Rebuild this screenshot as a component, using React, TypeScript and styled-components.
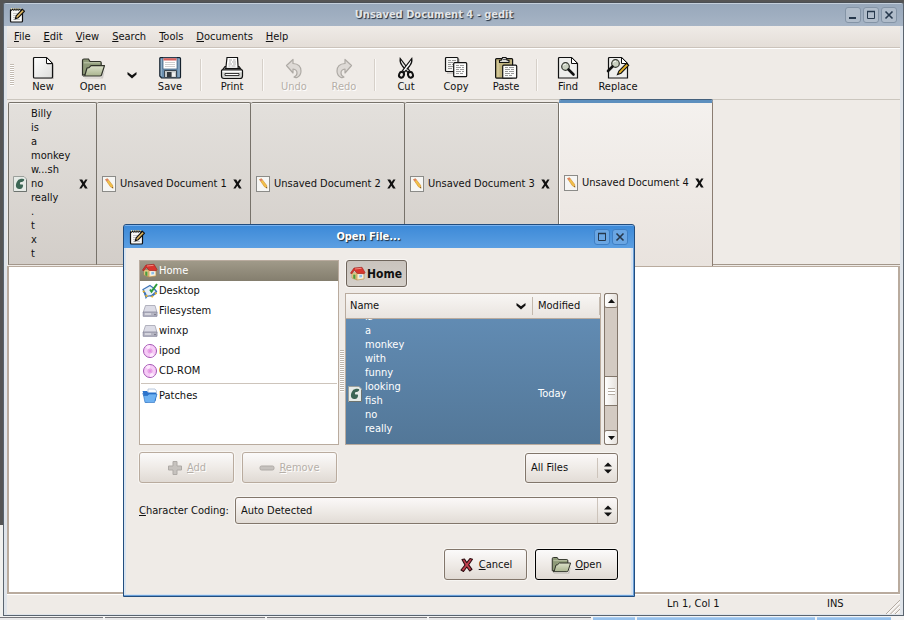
import React, { useLayoutEffect, useRef } from "react";
import styled, { createGlobalStyle, css } from "styled-components";

const face = "#efebe7";
const edge = "#b9ab9e";
const dark = "#82766b";

const GlobalStyle = createGlobalStyle`
  *, *::before, *::after { box-sizing: border-box; }
  body {
    margin: 0;
    color: #111;
    background: ${face};
    font: 11px/14px "DejaVu Sans Condensed", "Liberation Sans", sans-serif;
    cursor: default;
  }
  button, select, textarea, table { font: inherit; color: inherit; }
  button { margin: 0; padding: 0; border: 0; background: none; white-space: nowrap; }
  svg { display: block; flex: none; }
`;

/* ---------- icons ---------- */

const NotepadIcon = () => (
  <svg width="16" height="16" viewBox="0 0 16 16">
    <rect x="1.5" y="2.5" width="12" height="12.500" rx="1" fill="#f8f8f6" stroke="#111" strokeWidth="1.2" />
    <path d="M2 2.500h11" stroke="#111" strokeWidth="2.4" strokeDasharray="1.2 1" />
    <path d="M2 1.800h11" stroke="#eadfae" strokeWidth="1.6" strokeDasharray="1 1.2" />
    <path d="M4 6.500h5M4 8.500h3M4 10.500h2M4 12.500h7" stroke="#c6c6c6" />
    <path d="M6.300 11.800 7.200 8.800 13.400 2.300 15.500 4.200 9.200 10.700z" fill="#e0b860" stroke="#111" strokeWidth="1.100" />
    <path d="M6.300 11.800l.5-1.600 1.200 1z" fill="#111" />
  </svg>
);

const NewIcon = () => (
  <svg width="24" height="24" viewBox="0 0 24 24">
    <path d="M3 3h14l6 6v14H4z" fill="#0002" />
    <path d="M3.500 1.500h12l6 6V21a1 1 0 0 1-1 1h-17a1 1 0 0 1-1-1V2.500a1 1 0 0 1 1-1z" fill="url(#paper)" stroke="#111" strokeWidth="1.200" />
    <path d="M15.500 1.500v6h6z" fill="#fff" stroke="#111" strokeWidth="1" />
    <path d="M16 8.500h5" stroke="#bbb" />
    <defs>
      <linearGradient id="paper" x1="0" y1="0" x2="1" y2="1">
        <stop offset="0" stopColor="#fff" />
        <stop offset="1" stopColor="#dcdcda" />
      </linearGradient>
    </defs>
  </svg>
);

const FolderIcon = ({ size = 24 }: { size?: number }) => (
  <svg width={size} height={size} viewBox="0 0 24 24">
    <path d="M3 21.500h17l4-8-2 9H4z" fill="#0002" />
    <path d="M1.500 19V4.500Q1.500 3 3 3h4.500L9 5.500h10q1.200 0 1.200 1.300V10L20 16z" fill="#8e9a78" stroke="#30332a" strokeWidth="1.200" />
    <path d="M2.800 6.800h16.400" stroke="#c4cbb0" />
    <path d="M3.800 19.500 6 12l2-.4 2-2h13.500L20.500 19q-.3 1-1.500 1H2.500q1 0 1.300-.5z" fill="url(#flap)" stroke="#30332a" strokeWidth="1.200" strokeLinejoin="round" />
    <defs>
      <linearGradient id="flap" x1="0" y1="0" x2="0" y2="1">
        <stop offset="0" stopColor="#dde2cb" />
        <stop offset="1" stopColor="#a9b48e" />
      </linearGradient>
    </defs>
  </svg>
);

const SaveIcon = () => (
  <svg width="24" height="24" viewBox="0 0 24 24">
    <path d="M2.500 1.500h19q1 0 1 1V21q0 1-1 1h-18L1.800 20V2.500q0-1 .7-1z" fill="#6b8fb0" stroke="#14202c" strokeWidth="1.200" />
    <path d="M3.300 3v17M21 3v18" stroke="#9db8cf" />
    <path d="M5 2h14v11H5z" fill="#fff" stroke="#4b6a86" strokeWidth=".8" />
    <path d="M5.500 2.200h13v2.300h-13z" fill="#d8625f" />
    <path d="M7 6.500h10M7 8.500h10M7 10.500h10" stroke="#cfcfcf" />
    <path d="M6.500 14.500h12v7h-12z" fill="#c6c8c8" stroke="#3a4652" />
    <path d="M9 16h4.500v5H9z" fill="#33393f" />
    <path d="M14 16.500h3v4h-3z" fill="#efefef" />
  </svg>
);

const PrintIcon = () => (
  <svg width="24" height="24" viewBox="0 0 24 24">
    <path d="M5 10.500 2 14.500v4.500h20v-4.500l-3-4z" fill="#f4f4f2" stroke="#111" strokeWidth="1.200" />
    <path d="M5.800 12.500 7 1.500h10.500L18.200 12.500z" fill="#fff" stroke="#111" strokeWidth="1.200" />
    <path d="M9 4h3m1 0h2.500M9 6h2m1 0h4M8.500 8H12m1 0h3M8.500 10h2m1 0h4" stroke="#999" strokeWidth=".8" />
    <path d="M4.500 12.500h15.500" stroke="#111" strokeWidth="1.200" />
    <path d="M1.500 14.800q0-1 1-1h19q1 0 1 1V20q0 2.500-2.500 2.500H4Q1.500 22.500 1.500 20z" fill="#d2d3d0" stroke="#111" strokeWidth="1.200" />
    <path d="M2.500 15.500h19" stroke="#fff" strokeWidth="1.500" />
    <path d="M5 17.500h14v2H5z" fill="#fff" stroke="#222" strokeWidth=".9" />
  </svg>
);

const UndoIcon = ({ flip = false }: { flip?: boolean }) => (
  <svg width="24" height="24" viewBox="0 0 24 24">
    <g transform={flip ? "translate(24 0) scale(-1 1)" : undefined}>
      <path
        d="M4.500 9.500 11 3.500v4q8 .5 8 7.500 0 4.500-4 6.500-1.500.5-3-.5 3-1 3-4 0-3.500-4-4v4z"
        fill="#dedad6"
        stroke="#aeaaa5"
        strokeWidth="1.200"
        strokeLinejoin="round"
      />
    </g>
  </svg>
);

const CutIcon = () => (
  <svg width="24" height="24" viewBox="0 0 24 24" fill="none">
    <path d="M6.200 2.500q-.6 4 2.200 7.500l5.500 6.500 1.500-2z" fill="#e8e8e6" stroke="#111" strokeWidth="1.200" />
    <path d="M17.800 2.500q.6 4-2.200 7.500l-5.500 6.500-1.500-2z" fill="#fff" stroke="#111" strokeWidth="1.200" />
    <ellipse cx="7.500" cy="18.800" rx="2.400" ry="2.900" stroke="#111" strokeWidth="2" transform="rotate(20 7.500 18.800)" />
    <ellipse cx="16.500" cy="18.800" rx="2.400" ry="2.900" stroke="#111" strokeWidth="2" transform="rotate(-20 16.500 18.800)" />
    <circle cx="12" cy="13.500" r=".8" fill="#eee" />
  </svg>
);

const CopyIcon = () => (
  <svg width="24" height="24" viewBox="0 0 24 24">
    <path d="M3 3h13v15H3z" fill="#0002" />
    <rect x="1.500" y="1.500" width="12.500" height="14" rx="1" fill="#f5f5f3" stroke="#111" strokeWidth="1.200" />
    <path d="M4 4.500h3m1 0h4M4 6.500h5m1 0h2M4 8.500h3m1 0h2M4 10.500h5M4 12.500h4" stroke="#999" />
    <rect x="9.700" y="6.700" width="13" height="14" rx="1" fill="#fbfbfa" stroke="#111" strokeWidth="1.200" />
    <path d="M12 9.500h3m1 0h4M12 11.500h5m1 0h2M12 13.500h3m1 0h4M12 15.500h5m1 0h2M12 17.500h3m1 0h3" stroke="#999" />
  </svg>
);

const PasteIcon = () => (
  <svg width="24" height="24" viewBox="0 0 24 24">
    <rect x="1.600" y="2.600" width="17" height="19.500" rx="1" fill="#bfb27c" stroke="#111" strokeWidth="1.200" />
    <path d="M3 6h2.500M3 8h2.500M3 10h2.500M3 12h2.500M3 14h2.500M3 16h2.500M3 18h2.500M3 20h2.500" stroke="#e2d8ac" />
    <path d="M5.500 6.500V4.500l2-.5 1-2.500h3.500l1 2.500 2 .5v2z" fill="#d9d9d6" stroke="#111" strokeWidth="1.100" />
    <path d="M9 3.500h3" stroke="#555" />
    <rect x="8.700" y="9.200" width="14" height="13" rx="1" fill="#fbfbfa" stroke="#111" strokeWidth="1.200" />
    <path d="M11 11.500h3m1 0h5M11 13.500h5m1 0h3M11 15.500h3m1 0h5M11 17.500h5m1 0h3M11 19.500h3m1 0h3" stroke="#999" />
  </svg>
);

const FindIcon = () => (
  <svg width="24" height="24" viewBox="0 0 24 24">
    <path d="M3.500 1.500h12l6 6V22h-19V2.500q0-1 1-1z" fill="#eeeeec" stroke="#111" strokeWidth="1.200" />
    <path d="M15.500 1.500v6h6z" fill="#fff" stroke="#111" />
    <circle cx="9.500" cy="10.500" r="3.800" fill="#c9d0c0" stroke="#33362f" strokeWidth="1.200" />
    <path d="M7.500 9.500q.8-1.500 2.500-1.500" stroke="#fff" fill="none" />
    <path d="m12.500 13.500 5 5" stroke="#111" strokeWidth="2.600" strokeLinecap="round" />
  </svg>
);

const ReplaceIcon = () => (
  <svg width="24" height="24" viewBox="0 0 24 24">
    <path d="M3.500 1.500h12l6 6V22h-19V2.500q0-1 1-1z" fill="#eeeeec" stroke="#111" strokeWidth="1.200" />
    <path d="M15.500 1.500v6h6z" fill="#fff" stroke="#111" />
    <circle cx="9.500" cy="7.500" r="3.800" fill="#c9d0c0" stroke="#33362f" strokeWidth="1.200" />
    <path d="M7.500 6.500q.8-1.500 2.500-1.500" stroke="#fff" fill="none" />
    <path d="m6.500 10.500-4.500 4.500" stroke="#111" strokeWidth="2.600" strokeLinecap="round" />
    <path d="m11.500 18.500 1.400-3.500L20.500 7.300l2.200 2-7.700 7.900z" fill="#e6b42c" stroke="#111" strokeWidth="1.100" />
  </svg>
);

const ChevronIcon = () => (
  <svg width="10" height="8" viewBox="0 0 10 8">
    <path d="M.5 1v2.500L5 7.500l4.500-4V1L5 4.200z" fill="#111" />
  </svg>
);

const PencilPageIcon = () => (
  <svg width="14" height="16" viewBox="0 0 14 16">
    <rect x=".5" y=".5" width="13" height="15" fill="#f6f6f4" stroke="#8b8b88" />
    <path d="m3.500 3.500 2-.8 5 6.500.6 3-2.700-1.500z" fill="#f2c24a" stroke="#d08a2a" strokeWidth=".6" />
    <path d="m3.500 3.500 2-.8 1 1.400-1.900 1.100z" fill="#dd7a6a" />
    <path d="m11.100 12.200-1-.5.800-.6z" fill="#222" />
  </svg>
);

const GnomePageIcon = () => (
  <svg width="14" height="16" viewBox="0 0 14 16">
    <path d="M.5.500h10.500l2.500 2.500v12.500H.5z" fill="#e6ebe7" stroke="#9a9f9b" />
    <path d="M1 15.500h12.500V4" stroke="#6d736f" fill="none" />
    <path d="M3.800 6q1-2.800 4.200-3.200 2.500-.3 3.200.5.300 1.500-1.200 2.200-1 .6-2.300.6-1.200 1-.7 2.100 1.500.6 2.700.2.900 1-.2 3-1.200 1.900-3.200 1.600Q3 12.700 2.900 9.500q0-2 .9-3.500z" fill="#3c6655" />
  </svg>
);

const CloseGlyph = () => (
  <svg width="9" height="10" viewBox="0 0 9 10">
    <path d="M.3.500h2.900l1.500 2.600L6.300.5h2.200L5.800 5l2.900 4.500H6L4.300 6.800 2.500 9.500H.3L3.200 5z" fill="#111" />
  </svg>
);

const HomeIcon = () => (
  <svg width="16" height="16" viewBox="0 0 16 16">
    <path d="M2 7h5v7L2 12z" fill="#f3d49a" stroke="#b98a45" strokeWidth=".6" />
    <path d="M7 7h7v6l-7 1z" fill="#fbe9c4" stroke="#b98a45" strokeWidth=".6" />
    <path d="M3.200 8.500h2.300v4.700l-2.300-1z" fill="#4b9a3c" />
    <path d="M9 8.500h3.500v3L9 12z" fill="#8fc0e8" stroke="#fff" strokeWidth=".6" />
    <path d="M.5 7 4 2l8-.7 3 5.200-.8 1.200L7.500 7.500 4.300 4.300 1.500 8z" fill="#d8362e" stroke="#9c1f1c" strokeWidth=".6" />
    <path d="M5 3 11.500 2.300" stroke="#f08a80" />
  </svg>
);

const DesktopIcon = () => (
  <svg width="16" height="16" viewBox="0 0 16 16">
    <path d="M1 6.500 8 2.500q3.500 2 6.500 6L9.500 13Q5 12.500 4 14.500 3 10.500 1 6.500z" fill="#e6f0fa" stroke="#3e74b8" strokeWidth="1.300" />
    <path d="M1.500 8q2 2.500 2.800 5.500M9 13.500l5.500-4" stroke="#3e74b8" strokeWidth="2" fill="none" />
    <path d="m3.500 13 2-.3M13 11l1.500-1.300M9.500 14l1.500-1M1 8l1.500 1" stroke="#e6b22d" strokeWidth="2" />
    <path d="M8 6.500 9.500 8.500 15 1" stroke="#2f9c3a" strokeWidth="2" fill="none" />
  </svg>
);

const DriveIcon = () => (
  <svg width="16" height="16" viewBox="0 0 16 16">
    <path d="M3.500 2.500h9.500l2 7H1.200z" fill="#dcdce6" stroke="#a2a2b0" strokeWidth=".8" />
    <path d="M1.200 9h13.800v4.300H1.200z" fill="#b6b6c3" stroke="#85859a" strokeWidth=".8" />
    <path d="M3 11h6" stroke="#f1f1f6" />
    <circle cx="13" cy="11.500" r=".7" fill="#5d5d70" />
  </svg>
);

const DiscIcon = () => (
  <svg width="16" height="16" viewBox="0 0 16 16">
    <circle cx="8" cy="8" r="6.500" fill="#f6cbf6" stroke="#a455b4" />
    <path d="M8 8 3.500 4A6 6 0 0 1 8 2z" fill="#fde9fd" />
    <path d="M8 8l4.500 4A6 6 0 0 1 8 14z" fill="#fde9fd" />
    <circle cx="8" cy="8" r="2.200" fill="#ecaaeb" stroke="#dd97de" strokeWidth=".6" />
    <circle cx="8" cy="8" r=".8" fill="#e070de" />
  </svg>
);

const BlueFolderIcon = () => (
  <svg width="16" height="16" viewBox="0 0 16 16">
    <path d="M6 1h7l1.500 2v6H6z" fill="#fafcff" stroke="#a9bdd6" strokeWidth=".8" />
    <path d="M.5 3h4.500l1 1.500H14v8l-10 2z" fill="#2a72cc" />
    <path d="M1 5 3 14.500h9.500l2.500-8.500H7L5.500 7.500H1.500z" fill="#6db1f2" stroke="#2469bd" strokeWidth=".6" />
  </svg>
);

const PlusIcon = () => (
  <svg width="16" height="16" viewBox="0 0 16 16">
    <path d="M6 1.500h4V6h4.500v4H10v4.500H6V10H1.500V6H6z" fill="#c6c2be" stroke="#aeaaa6" strokeLinejoin="round" />
  </svg>
);

const MinusIcon = () => (
  <svg width="16" height="16" viewBox="0 0 16 16">
    <rect x="1" y="6" width="14" height="4" rx="1.500" fill="#c6c2be" stroke="#aeaaa6" />
  </svg>
);

const CancelIcon = () => (
  <svg width="16" height="16" viewBox="0 0 16 16">
    <path
      d="M3 2.500 5.500 2l2.300 3.700L11 1.500l2.500.8-3.800 5.500 3.300 4.500-2.300 1.700L7.800 10 4.500 14.500 2 13l4-5z"
      fill="#c3404e"
      stroke="#2c0c10"
      strokeWidth="1.100"
      strokeLinejoin="round"
    />
  </svg>
);

const SpinArrows = () => (
  <svg width="8" height="12" viewBox="0 0 8 12">
    <path d="M0 4.500 4 .5l4 4zM0 7.500h8l-4 4z" fill="#111" />
  </svg>
);

const ArrowGlyph = ({ down = false }: { down?: boolean }) => (
  <svg width="7" height="4" viewBox="0 0 7 4">
    <path d={down ? "M0 0h7L3.500 4z" : "M0 4h7L3.500 0z"} fill="#111" />
  </svg>
);

const SizeGrip = () => (
  <svg width="14" height="14" viewBox="0 0 14 14">
    <path d="M0 14 14 0M4.500 14 14 4.500M9 14l5-5" stroke="#b3aaa1" />
    <path d="M1.500 14 14 1.500M6 14l8-8M10.500 14l3.500-3.500" stroke="#fff" />
  </svg>
);

const WindowGlyph = ({ kind }: { kind: "min" | "max" | "close" }) => (
  <svg width="10" height="10" viewBox="0 0 10 10" fill="none" stroke="#26384c">
    {kind === "min" && <path d="M1 8h7" strokeWidth="2" />}
    {kind === "max" && (
      <>
        <path d="M1.500 1.500h7v7h-7z" />
        <path d="M1 1.500h8" strokeWidth="1.500" />
      </>
    )}
    {kind === "close" && <path d="m1.500 1.500 7 7m0-7-7 7" strokeWidth="1.600" />}
  </svg>
);

/* ---------- window frames ---------- */

const Screen = styled.div`
  min-height: 100vh;
  display: flex;
  flex-direction: column;
  padding: 2px 0 0 3px;
  background: linear-gradient(#555 525px, #f0f0ee 525px);
`;

const AppWindow = styled.main`
  flex: 1;
  display: flex;
  flex-direction: column;
  position: relative;
  border: 1px solid #5a646f;
  border-top-color: #4a4f55;
  border-radius: 3px 3px 0 0;
  background: #dfe4ea;
  box-shadow: inset 0 1px #c4cfdb;
`;

const TitleBar = styled.header<{ $active?: boolean }>`
  display: flex;
  align-items: center;
  height: 22px;
  margin-top: 1px;
  padding: 0 6px 0 5px;
  background: ${(p) => (p.$active ? "linear-gradient(#3d8ad8, #5c9fe2)" : "linear-gradient(#98a8bb, #a6b4c5)")};
  color: ${(p) => (p.$active ? "#fff" : "#e2e5e8")};
`;

const WindowTitle = styled.h1`
  flex: 1;
  margin: 0;
  text-align: center;
  font: inherit;
  font-weight: bold;
  text-shadow: 1px 1px 1px #1d2a38;
`;

const WindowButton = styled.button<{ $active?: boolean }>`
  display: flex;
  align-items: center;
  justify-content: center;
  width: 16px;
  height: 16px;
  margin-left: 2px;
  border: 1px solid ${(p) => (p.$active ? "#3f7fc4" : "#8494a6")};
  border-radius: 3px;
  background: ${(p) => (p.$active ? "#6aa6e3" : "#b0bcca")};
`;

const Client = styled.div`
  flex: 1;
  display: flex;
  flex-direction: column;
  margin: 0 3px 1px;
  background: ${face};
`;

/* ---------- menu and toolbar ---------- */

const MenuBar = styled.nav`
  display: flex;
  align-items: center;
  height: 22px;
  border-bottom: 1px solid #cbc3bb;
  background: linear-gradient(#efebe7, #e4ded8);
`;

const MenuItem = styled.button`
  padding: 1px 6px 0 7px;
  line-height: 20px;
`;

const Toolbar = styled.div`
  display: flex;
  align-items: center;
  height: 52px;
  padding: 2px 0 0 3px;
  border-top: 1px solid #fff;
  border-bottom: 1px solid #cbc6be;
`;

const Handle = styled.div`
  width: 4px;
  height: 22px;
  margin-right: 4px;
  background: repeating-linear-gradient(#c3bbb2 0 1px, #fff 1px 2px);
`;

const ToolButton = styled.button`
  display: flex;
  flex-direction: column;
  align-items: center;
  width: 50px;
  &:disabled {
    color: #b5afa8;
    text-shadow: 1px 1px #fff;
  }
`;

const ArrowButton = styled.button`
  display: flex;
  justify-content: center;
  width: 27px;
`;

const Separator = styled.span`
  width: 2px;
  height: 32px;
  margin: 0 5px;
  border-left: 1px solid #d6d0c9;
  background: #faf8f6;
`;

/* ---------- document tabs ---------- */

const TabStrip = styled.div`
  display: flex;
  align-items: stretch;
  padding-left: 1px;
`;

const Tab = styled.div<{ $active?: boolean; $wide?: boolean }>`
  display: flex;
  align-items: center;
  gap: 4px;
  min-width: ${(p) => (p.$wide ? 154 : 89)}px;
  margin-top: 2px;
  padding: 4px 8px 3px 5px;
  border: 1px solid #77726a;
  border-left-width: 0;
  border-bottom-color: #a3978b;
  border-radius: 2px 2px 0 0;
  background: linear-gradient(#e3e0dc, #d3cec9);
  box-shadow: inset 0 1px #f5f4f2;
  &:first-child {
    padding-left: 4px;
    border-left-width: 1px;
  }
  ${(p) =>
    p.$active &&
    css`
      margin: 0 0 -1px;
      padding-top: 2px;
      padding-bottom: 5px;
      border-color: #8b7d72;
      border-top: 3px solid #5d8fbe;
      border-bottom: 0;
      background: linear-gradient(#f4f1ee, #e9e3de);
      box-shadow: inset 1px 0 #fff, 0 -1px #44607c;
    `}
`;

const TabLabel = styled.span`
  flex: 1;
  white-space: pre-line;
`;

const TabRest = styled.div`
  flex: 1;
  border-bottom: 1px solid #a3978b;
`;

const Editor = styled.textarea`
  flex: 1;
  min-height: 100px;
  resize: none;
  outline: 0;
  border: solid ${edge};
  border-width: 1px 2px 2px;
  margin: 1px 0 0;
  padding: 3px;
  background: #fff;
`;

const StatusBar = styled.footer`
  display: flex;
  align-items: center;
  justify-content: flex-end;
  height: 20px;
  border-top: 1px solid #fff;
`;

const StatusText = styled.span<{ $width: number }>`
  width: ${(p) => p.$width}px;
  padding-bottom: 2px;
`;

const GripSlot = styled.span`
  align-self: flex-end;
`;

const Taskbar = styled.div`
  display: flex;
  gap: 2px;
  height: 4px;
  margin-left: -3px;
  padding-top: 1px;
  background: #f4f4f4;
`;

const Task = styled.span<{ $blue?: boolean; $width: number }>`
  width: ${(p) => p.$width}px;
  border-top: 1px solid ${(p) => (p.$blue ? "#a9cdf2" : "#77777c")};
  background: ${(p) => (p.$blue ? "#97c1ec" : "#e9e9ea")};
`;

/* ---------- dialog ---------- */

const Dialog = styled.section`
  position: absolute;
  left: 119px;
  top: 221px;
  width: 512px;
  display: flex;
  flex-direction: column;
  border: 1px solid #224d7e;
  border-radius: 3px 3px 0 0;
  background: #d7e3f0;
  box-shadow: inset 0 1px #7ab2ee, inset -1px -1px #6a9fd8;
`;

const DialogBody = styled.div`
  display: flex;
  flex-direction: column;
  margin: 0 3px 2px 2px;
  padding: 12px 13px 14px 13px;
  background: ${face};
`;

const Browser = styled.div`
  display: grid;
  grid-template-columns: 200px 6px minmax(0, 1fr);
`;

const Places = styled.ul`
  height: 185px;
  margin: 0;
  padding: 0;
  list-style: none;
  border: 1px solid ${edge};
  background: #fff;
`;

const Place = styled.li<{ $selected?: boolean; $divided?: boolean }>`
  display: flex;
  align-items: center;
  gap: 1px;
  height: 20px;
  padding-left: 2px;
  ${(p) => p.$selected && css`color: #fff; background: linear-gradient(#a09a89, #847e6e);`}
  ${(p) =>
    p.$divided &&
    css`
      height: 24px;
      margin: 2px 1px 0;
      padding-left: 1px;
      border-top: 1px solid #cdc4bb;
    `}
`;

const PaneGrip = styled.div`
  align-self: center;
  justify-self: center;
  width: 4px;
  height: 42px;
  margin-top: 36px;
  background: repeating-linear-gradient(#bdb5ab 0 1px, #fff 1px 2px);
`;

const Files = styled.div`
  display: flex;
  flex-direction: column;
  gap: 6px;
`;

const PathButton = styled.button`
  align-self: flex-start;
  display: flex;
  align-items: center;
  gap: 1px;
  height: 27px;
  margin-left: 1px;
  padding: 0 4px 0 3px;
  border: 1px solid #6f655c;
  border-radius: 3px;
  background: linear-gradient(#c9c3bd, #d4cfc9);
  font-weight: bold;
  font-size: 12px;
  box-shadow: 0 0 0 1px #f8f5f2;
`;

const ListArea = styled.div`
  display: flex;
  gap: 3px;
  height: 152px;
`;

const ListFrame = styled.div`
  flex: 1;
  overflow-y: scroll;
  scrollbar-width: none;
  border: 1px solid ${edge};
  background: #fff;
`;

const FileTable = styled.table`
  width: 100%;
  border-collapse: separate;
  border-spacing: 0;
  table-layout: fixed;
`;

const HeadCell = styled.th<{ $width?: number }>`
  position: sticky;
  top: 0;
  ${(p) => p.$width && `width: ${p.$width}px;`}
  height: 25px;
  padding: 0 6px 0 4px;
  border-bottom: 1px solid ${edge};
  background: linear-gradient(#f8f6f4, #e9e4df);
  font-weight: normal;
  text-align: left;
  & + & { padding-left: 5px; }
`;

const HeadLabel = styled.span`
  display: flex;
  align-items: center;
  justify-content: space-between;
`;

const HeadRule = styled.span`
  width: 1px;
  height: 18px;
  margin-right: -6px;
  background: #c3b9ae;
`;

const HeadText = styled.span`
  flex: 1;
`;

const ChevronSlot = styled.span`
  margin-right: 6px;
`;

const FileRow = styled.tr`
  color: #fff;
  background: linear-gradient(#648fb8, #4d6f8d);
`;

const FileCell = styled.td`
  height: 198px;
  padding: 0 5px 0 2px;
  & + & { padding-left: 5px; }
`;

const FileName = styled.span`
  display: flex;
  align-items: center;
  gap: 3px;
  white-space: pre-line;
`;

const ScrollBar = styled.div`
  display: flex;
  flex-direction: column;
  width: 14px;
  border: 1px solid ${dark};
  border-radius: 3px;
  background: #d3cac2;
`;

const ScrollButton = styled.button`
  display: flex;
  align-items: center;
  justify-content: center;
  height: 13px;
  border-radius: 2px;
  background: linear-gradient(90deg, #fff, #e6e1dc);
  box-shadow: 0 0 0 1px ${dark};
`;

const Thumb = styled.div`
  display: flex;
  align-items: center;
  justify-content: center;
  height: 28px;
  margin: auto 0 26px;
  background: linear-gradient(90deg, #fff, #e6e1dc);
  box-shadow: 0 0 0 1px ${dark};
  &::before {
    content: "";
    width: 7px;
    height: 7px;
    background: repeating-linear-gradient(#b5aca3 0 1px, #fff 1px 3px);
  }
`;

const Line = styled.div<{ $gap: number; $end?: boolean; $tight?: boolean }>`
  display: flex;
  align-items: center;
  gap: ${(p) => (p.$tight ? 6 : 8)}px;
  margin-top: ${(p) => p.$gap}px;
  justify-content: ${(p) => (p.$end ? "flex-end" : "flex-start")};
`;

const Button = styled.button<{ $width: number; $default?: boolean }>`
  display: flex;
  align-items: center;
  justify-content: center;
  gap: 4px;
  width: ${(p) => p.$width}px;
  height: 31px;
  border: 1px solid ${(p) => (p.$default ? "#000" : dark)};
  border-radius: 3px;
  background: linear-gradient(#fbfafa, #efebe7 50%, #e0dad4);
  box-shadow: 0 0 0 1px #f7f5f2;
  &:disabled {
    color: #b5afa8;
    text-shadow: 1px 1px #fff;
    border-color: ${edge};
  }
`;

const Combo = styled.span<{ $width?: number }>`
  position: relative;
  display: flex;
  ${(p) => (p.$width ? `width: ${p.$width}px; margin-left: auto;` : "flex: 1;")}
`;

const Select = styled.select<{ $height: number }>`
  appearance: none;
  width: 100%;
  height: ${(p) => p.$height}px;
  padding: 0 24px 0 5px;
  border: 1px solid ${dark};
  border-radius: 3px;
  background: linear-gradient(#fbf8f8, #efebe7 50%, #e2dcd6);
  box-shadow: 0 0 0 1px #f7f5f2;
`;

const ComboMark = styled.span<{ $full?: boolean }>`
  position: absolute;
  right: 1px;
  top: ${(p) => (p.$full ? 1 : 5)}px;
  bottom: ${(p) => (p.$full ? 1 : 5)}px;
  display: flex;
  align-items: center;
  justify-content: center;
  width: 20px;
  border-left: 1px solid #cdc4bb;
  pointer-events: none;
`;

/* ---------- page ---------- */

const Key = ({ text }: { text: string }) => (
  <span>
    <u>{text[0]}</u>
    {text.slice(1)}
  </span>
);

const menus = ["File", "Edit", "View", "Search", "Tools", "Documents", "Help"];

const tabs = [
  { label: "Billy\nis\na\nmonkey\nw...sh\nno\nreally\n.\nt\nx\nt", saved: true },
  { label: "Unsaved Document 1" },
  { label: "Unsaved Document 2" },
  { label: "Unsaved Document 3" },
  { label: "Unsaved Document 4", active: true },
];

const places = [
  { label: "Home", icon: <HomeIcon />, selected: true },
  { label: "Desktop", icon: <DesktopIcon /> },
  { label: "Filesystem", icon: <DriveIcon /> },
  { label: "winxp", icon: <DriveIcon /> },
  { label: "ipod", icon: <DiscIcon /> },
  { label: "CD-ROM", icon: <DiscIcon /> },
  { label: "Patches", icon: <BlueFolderIcon />, divided: true },
];

const fileName = "Billy\nis\na\nmonkey\nwith\nfunny\nlooking\nfish\nno\nreally\n.\nt\nx\nt";

const tasks = [
  { width: 103 },
  { width: 160 },
  { width: 160 },
  { width: 162 },
  { width: 42, blue: true },
  { width: 178, blue: true },
  { width: 74, blue: true },
];

const Tool = ({ label, icon, disabled }: { label: string; icon: React.ReactNode; disabled?: boolean }) => (
  <ToolButton type="button" disabled={disabled}>
    {icon}
    {label}
  </ToolButton>
);

function FileList() {
  const frame = useRef<HTMLDivElement>(null);
  useLayoutEffect(() => {
    if (frame.current) frame.current.scrollTop = 24;
  }, []);
  return (
    <ListArea>
      <ListFrame ref={frame}>
        <FileTable>
          <thead>
            <tr>
              <HeadCell>
                <HeadLabel>
                  <HeadText>Name</HeadText>
                  <ChevronSlot>
                    <ChevronIcon />
                  </ChevronSlot>
                  <HeadRule />
                </HeadLabel>
              </HeadCell>
              <HeadCell $width={67}>
                <HeadLabel>
                  <HeadText>Modified</HeadText>
                  <HeadRule />
                </HeadLabel>
              </HeadCell>
            </tr>
          </thead>
          <tbody>
            <FileRow>
              <FileCell>
                <FileName>
                  <GnomePageIcon />
                  <span>{fileName}</span>
                </FileName>
              </FileCell>
              <FileCell>Today</FileCell>
            </FileRow>
          </tbody>
        </FileTable>
      </ListFrame>
      <ScrollBar>
        <ScrollButton type="button" aria-label="Scroll up">
          <ArrowGlyph />
        </ScrollButton>
        <Thumb />
        <ScrollButton type="button" aria-label="Scroll down">
          <ArrowGlyph down />
        </ScrollButton>
      </ScrollBar>
    </ListArea>
  );
}

function OpenDialog() {
  return (
    <Dialog role="dialog" aria-label="Open File">
      <TitleBar $active>
        <NotepadIcon />
        <WindowTitle as="h2">Open File...</WindowTitle>
        <WindowButton $active type="button" aria-label="Maximize">
          <WindowGlyph kind="max" />
        </WindowButton>
        <WindowButton $active type="button" aria-label="Close">
          <WindowGlyph kind="close" />
        </WindowButton>
      </TitleBar>
      <DialogBody>
        <Browser>
          <Places>
            {places.map((p) => (
              <Place key={p.label} $selected={p.selected} $divided={p.divided}>
                {p.icon}
                {p.label}
              </Place>
            ))}
          </Places>
          <PaneGrip />
          <Files>
            <PathButton type="button">
              <HomeIcon />
              Home
            </PathButton>
            <FileList />
          </Files>
        </Browser>
        <Line $gap={7}>
          <Button type="button" disabled $width={95}>
            <PlusIcon />
            <Key text="Add" />
          </Button>
          <Button type="button" disabled $width={95}>
            <MinusIcon />
            <Key text="Remove" />
          </Button>
          <Combo $width={93}>
            <Select $height={30} aria-label="File type">
              <option>All Files</option>
            </Select>
            <ComboMark>
              <SpinArrows />
            </ComboMark>
          </Combo>
        </Line>
        <Line $gap={14} $tight>
          <label htmlFor="coding">
            <Key text="Character Coding:" />
          </label>
          <Combo>
            <Select id="coding" $height={27}>
              <option>Auto Detected</option>
            </Select>
            <ComboMark $full>
              <SpinArrows />
            </ComboMark>
          </Combo>
        </Line>
        <Line $gap={25} $end>
          <Button type="button" $width={83}>
            <CancelIcon />
            <Key text="Cancel" />
          </Button>
          <Button type="button" $width={83} $default>
            <FolderIcon size={20} />
            <Key text="Open" />
          </Button>
        </Line>
      </DialogBody>
    </Dialog>
  );
}

export default function App() {
  return (
    <Screen>
      <GlobalStyle />
      <AppWindow>
        <TitleBar>
          <NotepadIcon />
          <WindowTitle>Unsaved Document 4 - gedit</WindowTitle>
          <WindowButton type="button" aria-label="Minimize">
            <WindowGlyph kind="min" />
          </WindowButton>
          <WindowButton type="button" aria-label="Maximize">
            <WindowGlyph kind="max" />
          </WindowButton>
          <WindowButton type="button" aria-label="Close">
            <WindowGlyph kind="close" />
          </WindowButton>
        </TitleBar>
        <Client>
          <MenuBar>
            {menus.map((m) => (
              <MenuItem type="button" key={m}>
                <Key text={m} />
              </MenuItem>
            ))}
          </MenuBar>
          <Toolbar>
            <Handle />
            <Tool label="New" icon={<NewIcon />} />
            <Tool label="Open" icon={<FolderIcon />} />
            <ArrowButton type="button" aria-label="Recent files">
              <ChevronIcon />
            </ArrowButton>
            <Tool label="Save" icon={<SaveIcon />} />
            <Separator />
            <Tool label="Print" icon={<PrintIcon />} />
            <Separator />
            <Tool label="Undo" icon={<UndoIcon />} disabled />
            <Tool label="Redo" icon={<UndoIcon flip />} disabled />
            <Separator />
            <Tool label="Cut" icon={<CutIcon />} />
            <Tool label="Copy" icon={<CopyIcon />} />
            <Tool label="Paste" icon={<PasteIcon />} />
            <Separator />
            <Tool label="Find" icon={<FindIcon />} />
            <Tool label="Replace" icon={<ReplaceIcon />} />
          </Toolbar>
          <TabStrip>
            {tabs.map((t) => (
              <Tab key={t.label} $active={t.active} $wide={!t.saved}>
                {t.saved ? <GnomePageIcon /> : <PencilPageIcon />}
                <TabLabel>{t.label}</TabLabel>
                <button type="button" aria-label="Close tab">
                  <CloseGlyph />
                </button>
              </Tab>
            ))}
            <TabRest />
          </TabStrip>
          <Editor aria-label="Document text" />
          <StatusBar>
            <StatusText $width={160}>Ln 1, Col 1</StatusText>
            <StatusText $width={59}>INS</StatusText>
            <GripSlot>
              <SizeGrip />
            </GripSlot>
          </StatusBar>
        </Client>
        <OpenDialog />
      </AppWindow>
      <Taskbar>
        {tasks.map((t, i) => (
          <Task key={i} $width={t.width} $blue={t.blue} />
        ))}
      </Taskbar>
    </Screen>
  );
}
